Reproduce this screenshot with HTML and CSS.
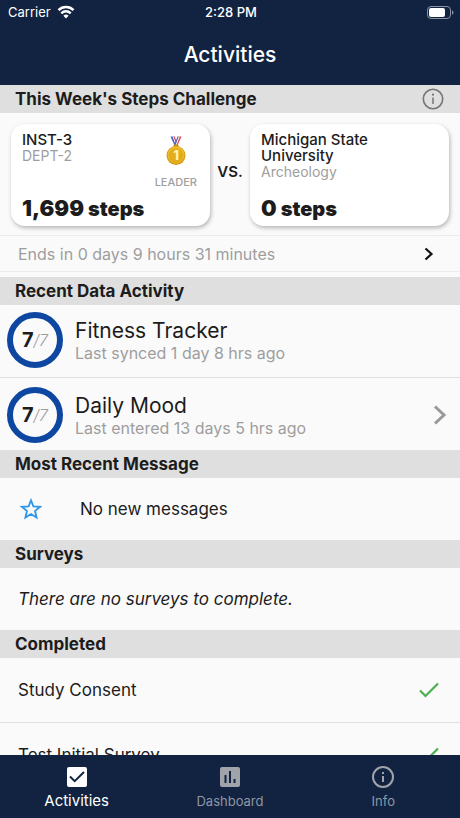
FILE: index.html
```html
<!DOCTYPE html>
<html lang="en">
<head>
<meta charset="UTF-8">
<meta name="viewport" content="width=device-width, initial-scale=1.0">
<title>Activities</title>
<link rel="stylesheet" href="styles.css">
</head>
<body>

<header class="app-header">
    <div class="status-bar">
        <div class="carrier">
            Carrier
            <svg width="18" height="14" viewBox="0 0 18 14" fill="none" stroke="#fff" stroke-width="2.5">
                <path d="M1.5 5.2a10.6 10.6 0 0 1 15 0M4.3 8.3a6.7 6.7 0 0 1 9.4 0"/>
                <path d="M6.4 10.7a3.7 3.7 0 0 1 5.2 0L9 13.4z" fill="#fff" stroke="none"/>
            </svg>
        </div>
        <div class="time">2:28 PM</div>
        <div class="battery">
            <svg width="27" height="13" viewBox="0 0 27 13">
                <rect x="0.5" y="0.5" width="23" height="12" rx="3.5" fill="none" stroke="#8a93a3"/>
                <rect x="2" y="2" width="16" height="9" rx="2" fill="#fff"/>
                <path d="M25 4.5v4c1-.4 1.5-1.1 1.5-2s-.5-1.6-1.5-2z" fill="#8a93a3"/>
            </svg>
        </div>
    </div>
    <h1 class="title">Activities</h1>
</header>

<main class="content">
    <!-- Steps challenge -->
    <section>
        <div class="section-header">
            <h2>This Week's Steps Challenge</h2>
            <button class="icon-button" aria-label="About the challenge">
                <svg width="22" height="22" viewBox="0 0 22 22" fill="none" stroke="#757575">
                    <circle cx="11" cy="11" r="9.7" stroke-width="1.6"/>
                    <path d="M11 9.5v6.5" stroke-width="1.5"/>
                    <circle cx="11" cy="6.7" r="1.1" fill="#757575" stroke="none"/>
                </svg>
            </button>
        </div>
        <div class="challenge">
            <div class="team-card">
                <div class="team-info">
                    <div>
                        <p class="team-name">INST-3</p>
                        <p class="team-dept">DEPT-2</p>
                    </div>
                    <div class="leader">
                        <svg width="20" height="30" viewBox="0 0 20 30">
                            <path d="M4.5 0.5h3.5l4 10H9z" fill="#4a5fc0"/>
                            <path d="M6.5 0.5h1.2l3.5 9.5h-1.1z" fill="#fff"/>
                            <path d="M7.5 0.5h1.2l3 8-.8 1.5z" fill="#dc4a50"/>
                            <path d="M15.5 0.5H12l-3.5 10H11z" fill="#dc4a50"/>
                            <path d="M13.7 0.5h-1.2L9 10h1.1z" fill="#fff"/>
                            <path d="M12.5 0.5h-1L8.5 8.5l.7 1.5z" fill="#4a5fc0"/>
                            <rect x="7.5" y="8.5" width="5" height="3" rx="1" fill="#c99213"/>
                            <circle cx="10" cy="19.5" r="9.5" fill="#d39a12"/>
                            <circle cx="10" cy="19" r="8.5" fill="#f1bd28"/>
                            <circle cx="10" cy="19.5" r="7.3" fill="#e2ac1e"/>
                            <text class="medal-number" x="10" y="24" text-anchor="middle">1</text>
                        </svg>
                        <span>LEADER</span>
                    </div>
                </div>
                <p class="team-steps"><span class="count">1,699</span> steps</p>
            </div>
            <span class="versus">VS.</span>
            <div class="team-card">
                <div class="team-info">
                    <div>
                        <p class="team-name">Michigan State University</p>
                        <p class="team-dept">Archeology</p>
                    </div>
                </div>
                <p class="team-steps"><span class="count">0</span> steps</p>
            </div>
        </div>
        <a class="challenge-end" href="#challenge">
            Ends in 0 days 9 hours 31 minutes
            <svg width="10" height="14" viewBox="0 0 10 14" fill="none" stroke="#111" stroke-width="2.2">
                <path d="M1.5 1.5L7.5 7l-6 5.5"/>
            </svg>
        </a>
    </section>

    <!-- Data activity -->
    <section>
        <div class="section-header"><h2>Recent Data Activity</h2></div>
        <div class="activity">
            <div class="ring"><b>7</b><span>/7</span></div>
            <div class="activity-text">
                <h3>Fitness Tracker</h3>
                <p>Last synced 1 day 8 hrs ago</p>
            </div>
        </div>
        <a class="activity" href="#mood">
            <div class="ring"><b>7</b><span>/7</span></div>
            <div class="activity-text">
                <h3>Daily Mood</h3>
                <p>Last entered 13 days 5 hrs ago</p>
            </div>
            <svg width="14" height="20" viewBox="0 0 14 20" fill="none" stroke="#999" stroke-width="3">
                <path d="M2 1.5L11 10l-9 8.5"/>
            </svg>
        </a>
    </section>

    <section>
        <div class="section-header"><h2>Most Recent Message</h2></div>
        <div class="row message">
            <svg width="22" height="22" viewBox="0 0 22 22" fill="none" stroke="#2f96e8" stroke-width="1.8">
                <path d="M11 2.3l2.4 6 6.7.5-5.1 4.2 1.6 6.5L11 16l-5.6 3.5L7 13 1.9 8.8l6.7-.5z"/>
            </svg>
            <p>No new messages</p>
        </div>
    </section>

    <section>
        <div class="section-header"><h2>Surveys</h2></div>
        <div class="row"><p class="empty">There are no surveys to complete.</p></div>
    </section>

    <section>
        <div class="section-header"><h2>Completed</h2></div>
        <div class="row completed">
            <p>Study Consent</p>
            <svg width="20" height="16" viewBox="0 0 20 16" fill="none" stroke="#4caf50" stroke-width="2.2">
                <path d="M1 8.5l5.5 5.5L19 1.5"/>
            </svg>
        </div>
        <div class="row completed">
            <p>Test Initial Survey</p>
            <svg width="20" height="16" viewBox="0 0 20 16" fill="none" stroke="#4caf50" stroke-width="2.2">
                <path d="M1 8.5l5.5 5.5L19 1.5"/>
            </svg>
        </div>
    </section>
</main>

<nav class="tab-bar">
    <a class="tab active" href="#activities">
        <svg width="22" height="22" viewBox="0 0 22 22">
            <rect x="1" y="1" width="20" height="20" rx="2" fill="#fff"/>
            <path d="M4 10.5l4.7 4.7L18 6" fill="none" stroke="#112341" stroke-width="2"/>
        </svg>
        Activities
    </a>
    <a class="tab" href="#dashboard">
        <svg width="22" height="22" viewBox="0 0 22 22">
            <rect x="1" y="1" width="20" height="20" rx="2" fill="#a0a4aa"/>
            <path d="M6.5 9v8M11 5v12M15.5 13v4" stroke="#112341" stroke-width="2"/>
        </svg>
        Dashboard
    </a>
    <a class="tab" href="#info">
        <svg width="22" height="22" viewBox="0 0 22 22" fill="none" stroke="#a0a4aa" stroke-width="2">
            <circle cx="11" cy="11" r="10"/>
            <path d="M11 10v6M11 6v2"/>
        </svg>
        Info
    </a>
</nav>

</body>
</html>
```
FILE: styles.css
```css
* {
    box-sizing: border-box;
}

body {
    display: flex;
    flex-direction: column;
    height: 100vh;
    margin: 0;
    background-color: #fafafa;
    color: #1c1c1c;
    font-family: Inter, "Liberation Sans", sans-serif;
    font-size: 16px;
}

h1, h2, h3, p {
    margin: 0;
}

a {
    color: inherit;
    text-decoration: none;
}

svg {
    display: block;
    flex: none;
}

.app-header {
    flex: none;
    background-color: #112341;
    color: #ffffff;
}

.status-bar {
    display: grid;
    grid-template-columns: 1fr auto 1fr;
    align-items: center;
    height: 24px;
    padding: 0 6px 0 8px;
    font-size: 13px;
}

.carrier {
    display: flex;
    align-items: center;
    gap: 6px;
}

.time {
    font-weight: 500;
}

.battery {
    justify-self: end;
}

.title {
    font-size: 21px;
    font-weight: 500;
    line-height: 61px;
    text-align: center;
}

.content {
    flex: 1;
    min-height: 0;
    overflow-y: auto;
    scrollbar-width: none;
}

.section-header {
    display: flex;
    align-items: center;
    justify-content: space-between;
    height: 28px;
    padding: 0 16px 0 15px;
    background-color: #dfdfdf;
}

.section-header h2 {
    font-size: 17px;
    font-weight: 700;
}

.icon-button {
    padding: 0;
    border: none;
    background: none;
    cursor: pointer;
}

.challenge {
    display: grid;
    grid-template-columns: 1fr 40px 1fr;
    align-items: center;
    padding: 11px 11px 9px;
}

.team-card {
    display: flex;
    flex-direction: column;
    justify-content: space-between;
    height: 102px;
    padding: 8px 11px 5px;
    border-radius: 14px;
    background-color: #ffffff;
    box-shadow: 1px 2px 4px rgba(0, 0, 0, 0.28);
}

.team-info {
    display: flex;
    justify-content: space-between;
}

.team-name {
    font-size: 15px;
    font-weight: 500;
    line-height: 16px;
}

.team-dept {
    color: #9e9e9e;
    font-size: 14px;
    line-height: 15px;
}

.leader {
    display: flex;
    flex-direction: column;
    align-items: center;
    gap: 9px;
    height: 50px;
    padding: 4px 2px 0 0;
    color: #9e9e9e;
    font-size: 11px;
    font-weight: 500;
}

.medal-number {
    fill: #fff3b0;
    font-size: 13px;
    font-weight: 800;
}

.team-steps {
    font-size: 20px;
    font-weight: 900;
    line-height: 24px;
}

.count {
    font-size: 22px;
}

.versus {
    margin-bottom: 8px;
    font-size: 15px;
    font-weight: 600;
    text-align: center;
}

.challenge-end {
    display: flex;
    align-items: center;
    justify-content: space-between;
    height: 37px;
    margin-bottom: 5px;
    padding: 0 26px 0 18px;
    border-top: 1px solid #ececec;
    border-bottom: 1px solid #ececec;
    color: #9e9e9e;
    font-size: 16px;
}

.activity {
    display: flex;
    align-items: center;
    gap: 12px;
    height: 72px;
    padding: 0 13px 2px 7px;
}

.activity + .activity {
    height: 73px;
    padding-top: 4px;
    border-top: 1px solid #e0e0e0;
}

.ring {
    display: flex;
    align-items: center;
    justify-content: center;
    width: 56px;
    height: 56px;
    border: 6px solid #0d47a1;
    border-radius: 50%;
    font-size: 20px;
}

.ring span {
    color: #9e9e9e;
    font-size: 16px;
    font-style: italic;
    font-weight: 300;
}

.activity-text {
    flex: 1;
    padding-top: 2px;
}

.activity-text h3 {
    font-size: 21px;
    font-weight: 400;
    line-height: 24px;
}

.activity-text p {
    color: #9e9e9e;
    font-size: 16px;
    line-height: 20px;
}

.row {
    display: flex;
    align-items: center;
    height: 62px;
    padding: 0 21px 0 18px;
    font-size: 17px;
}

.message {
    gap: 38px;
    padding-left: 20px;
}

.empty {
    font-style: italic;
}

.completed {
    justify-content: space-between;
    height: 65px;
    border-bottom: 1px solid #e0e0e0;
}

.tab-bar {
    display: grid;
    grid-template-columns: repeat(3, 1fr);
    flex: none;
    height: 63px;
    background-color: #112341;
    color: #8f96a3;
}

.tab {
    display: flex;
    flex-direction: column;
    align-items: center;
    gap: 4px;
    padding-top: 11px;
    font-size: 13px;
    line-height: 18px;
}

.tab.active {
    color: #ffffff;
    font-size: 15px;
}
```
